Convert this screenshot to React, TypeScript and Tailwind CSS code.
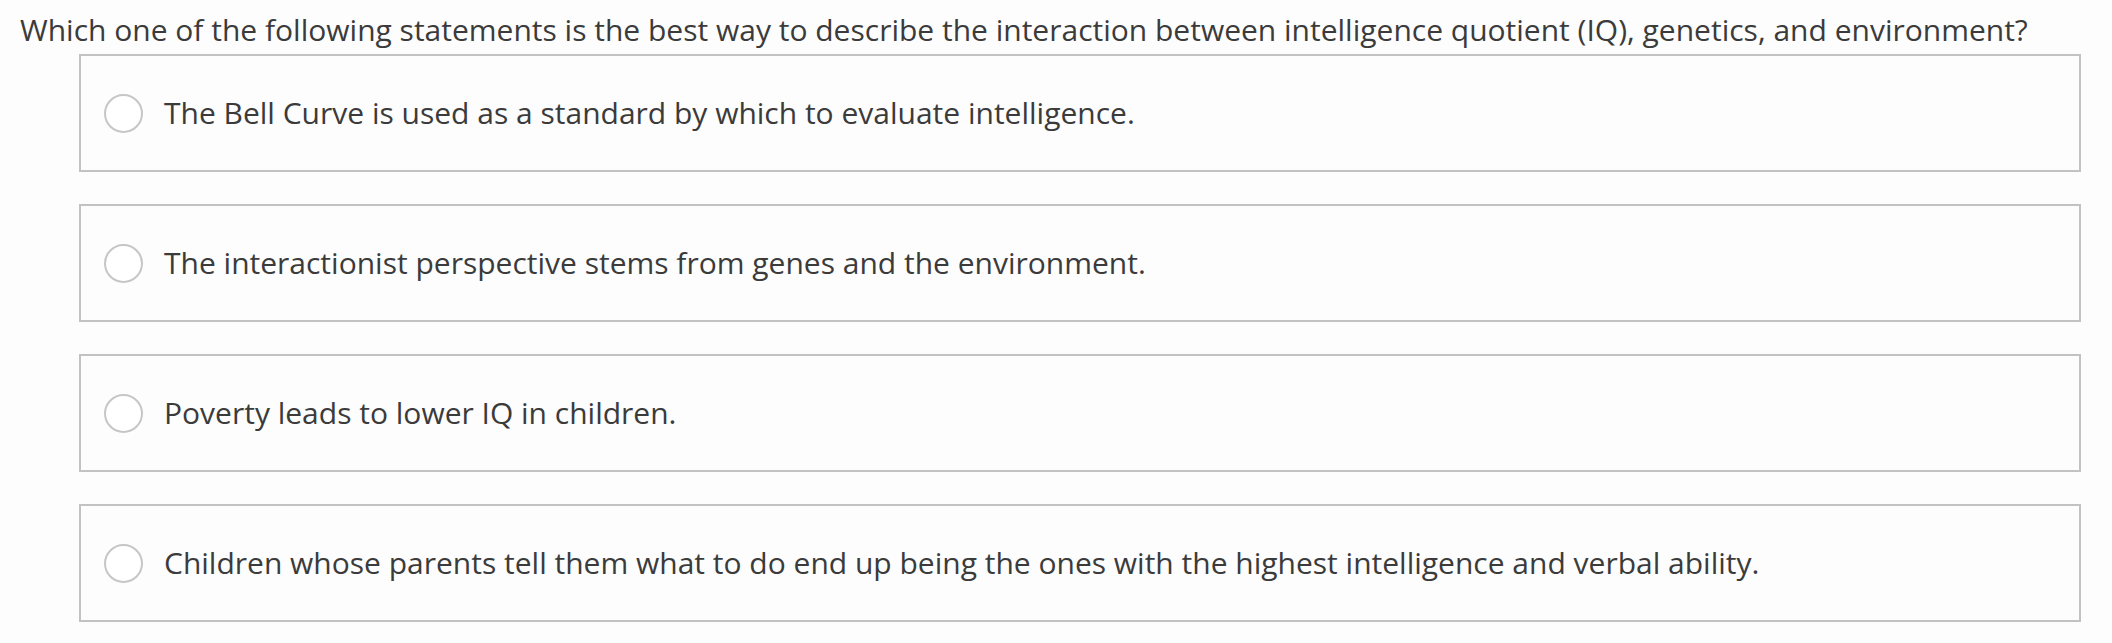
import React from 'react';

const options = [
  'The Bell Curve is used as a standard by which to evaluate intelligence.',
  'The interactionist perspective stems from genes and the environment.',
  'Poverty leads to lower IQ in children.',
  'Children whose parents tell them what to do end up being the ones with the highest intelligence and verbal ability.',
];

const App: React.FC = () => {
  return (
    <div className="min-h-[643px] w-[2112px] bg-[#fdfdfd] text-[#3b3b3b] font-['Open_Sans',sans-serif]">
      <div className="pl-[20px] pt-[11px] text-[30px] leading-[38px]">
        Which one of the following statements is the best way to describe the interaction between intelligence quotient (IQ), genetics, and environment?
      </div>
      <div className="ml-[79px] mt-[5px] flex w-[2002px] flex-col gap-[32px]">
        {options.map((text) => (
          <label
            key={text}
            className="flex h-[118px] items-center border-2 border-[#c2c2c2] bg-[#fdfdfd] pl-[23px]"
          >
            <span className="h-[39px] w-[39px] shrink-0 rounded-full border-2 border-[#c6c6c6] bg-white" />
            <span className="ml-[21px] text-[30px] leading-[40px]">{text}</span>
          </label>
        ))}
      </div>
    </div>
  );
};

export default App;
